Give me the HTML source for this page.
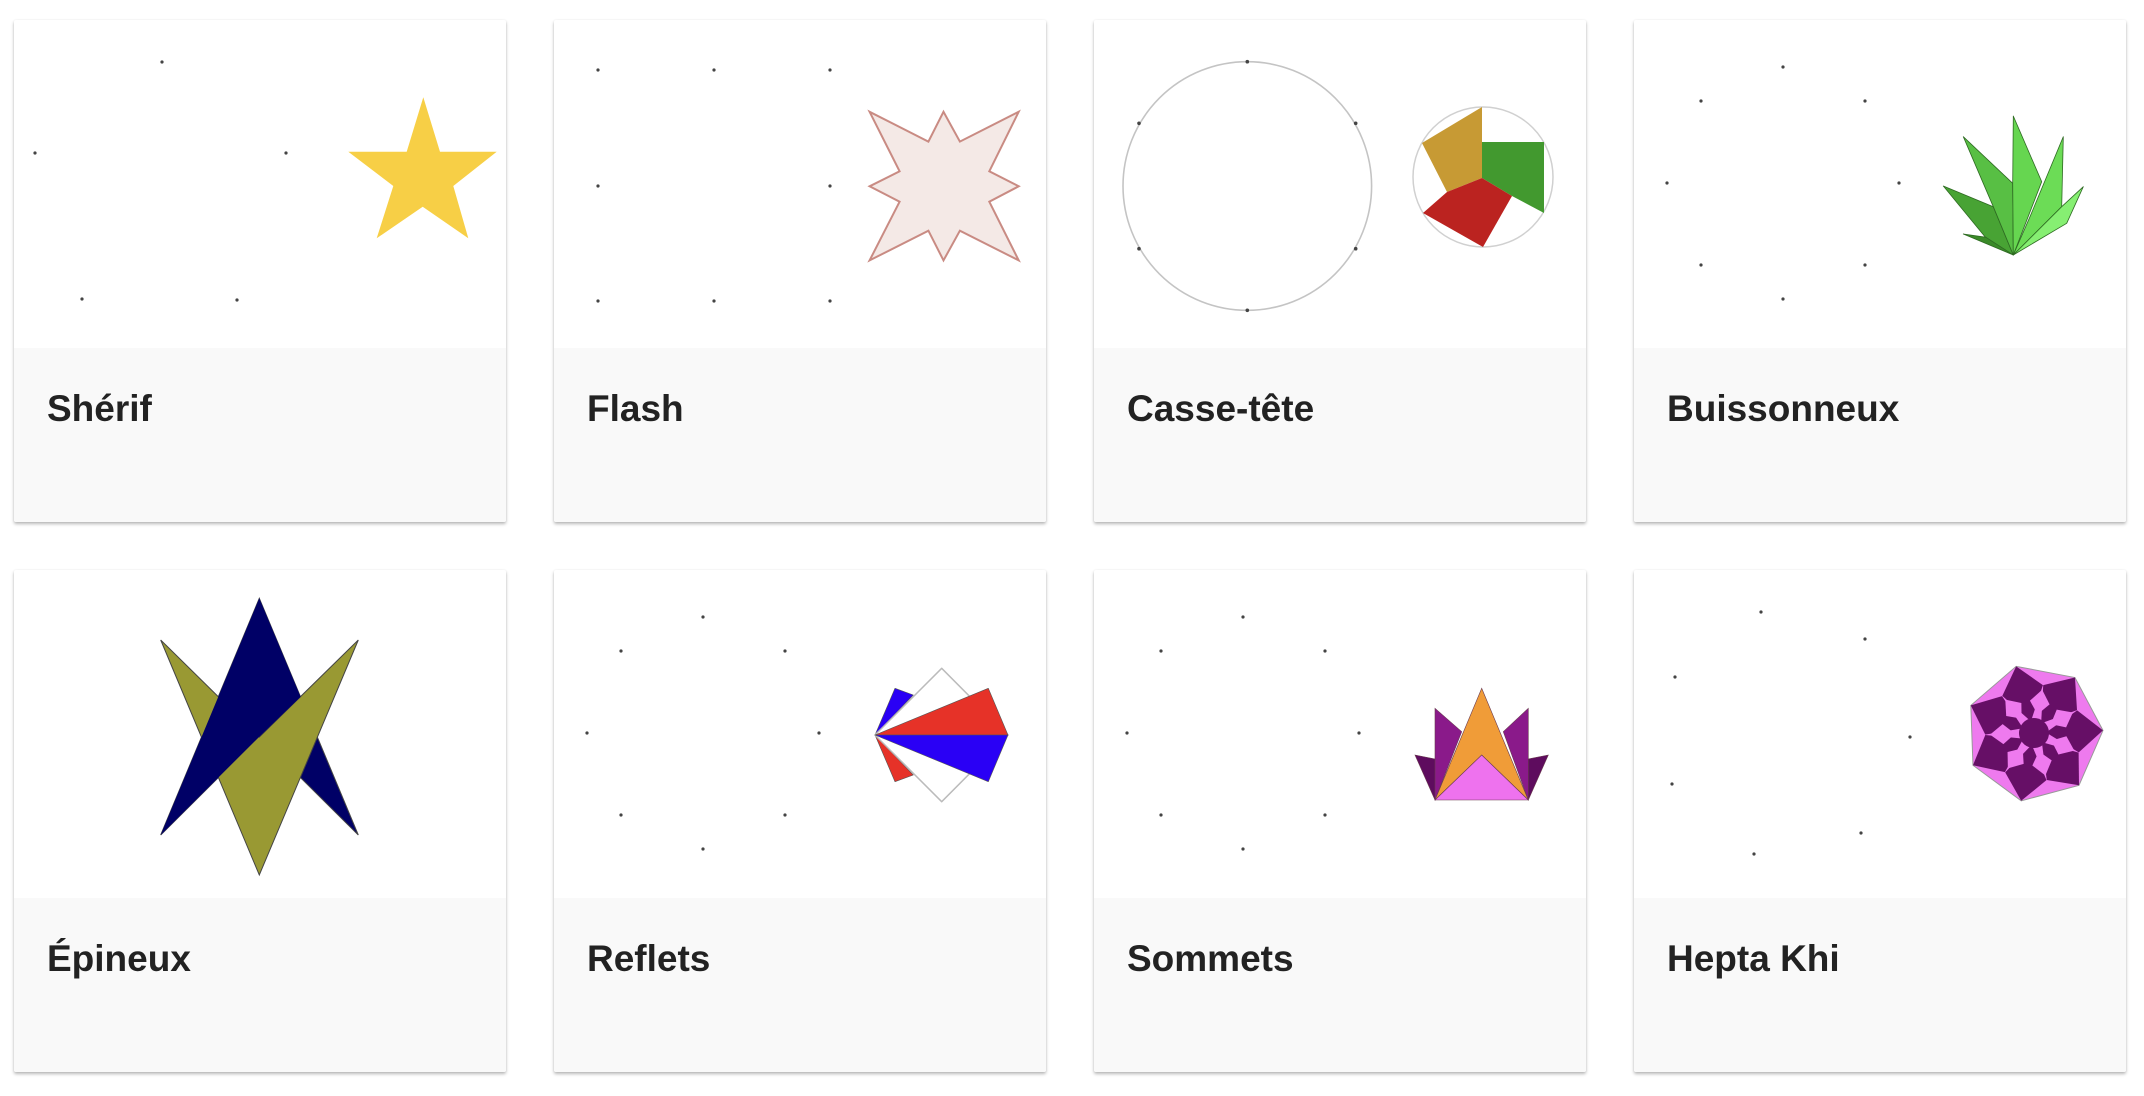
<!DOCTYPE html>
<html><head><meta charset="utf-8">
<style>
html,body{margin:0;padding:0;background:#fff;width:2144px;height:1096px;overflow:hidden;position:relative;font-family:"Liberation Sans",sans-serif;}
.card{position:absolute;width:492px;height:502px;background:#fff;box-shadow:0 2px 3px rgba(0,0,0,.28),0 0 2px rgba(0,0,0,.06);border-radius:2px;overflow:hidden;}
.foot{position:absolute;left:0;top:328px;width:492px;height:174px;background:#f9f9f9;}
.foot span{position:absolute;left:33px;top:41px;font-size:37px;line-height:40px;font-weight:bold;color:#222;white-space:nowrap;}
svg{position:absolute;left:0;top:0;}
</style></head><body>
<div class="card" style="left:14px;top:20px"><div class="foot"><span>Shérif</span></div></div>
<div class="card" style="left:554px;top:20px"><div class="foot"><span>Flash</span></div></div>
<div class="card" style="left:1094px;top:20px"><div class="foot"><span>Casse-tête</span></div></div>
<div class="card" style="left:1634px;top:20px"><div class="foot"><span>Buissonneux</span></div></div>
<div class="card" style="left:14px;top:570px"><div class="foot"><span>Épineux</span></div></div>
<div class="card" style="left:554px;top:570px"><div class="foot"><span>Reflets</span></div></div>
<div class="card" style="left:1094px;top:570px"><div class="foot"><span>Sommets</span></div></div>
<div class="card" style="left:1634px;top:570px"><div class="foot"><span>Hepta Khi</span></div></div>

<svg width="2144" height="1096" viewBox="0 0 2144 1096">
<g fill="#444">
<circle cx="162" cy="62" r="1.6"/><circle cx="35" cy="153" r="1.6"/><circle cx="286" cy="153" r="1.6"/><circle cx="82" cy="299" r="1.6"/><circle cx="237" cy="300" r="1.6"/>
<circle cx="598" cy="70" r="1.6"/><circle cx="714" cy="70" r="1.6"/><circle cx="830" cy="70" r="1.6"/>
<circle cx="598" cy="186" r="1.6"/><circle cx="830" cy="186" r="1.6"/>
<circle cx="598" cy="301" r="1.6"/><circle cx="714" cy="301" r="1.6"/><circle cx="830" cy="301" r="1.6"/>
<circle cx="1783" cy="67" r="1.6"/><circle cx="1701" cy="101" r="1.6"/><circle cx="1865" cy="101" r="1.6"/><circle cx="1667" cy="183" r="1.6"/><circle cx="1899" cy="183" r="1.6"/><circle cx="1701" cy="265" r="1.6"/><circle cx="1865" cy="265" r="1.6"/><circle cx="1783" cy="299" r="1.6"/>
<circle cx="703" cy="617" r="1.6"/><circle cx="621" cy="651" r="1.6"/><circle cx="785" cy="651" r="1.6"/><circle cx="587" cy="733" r="1.6"/><circle cx="819" cy="733" r="1.6"/><circle cx="621" cy="815" r="1.6"/><circle cx="785" cy="815" r="1.6"/><circle cx="703" cy="849" r="1.6"/>
<circle cx="1243" cy="617" r="1.6"/><circle cx="1161" cy="651" r="1.6"/><circle cx="1325" cy="651" r="1.6"/><circle cx="1127" cy="733" r="1.6"/><circle cx="1359" cy="733" r="1.6"/><circle cx="1161" cy="815" r="1.6"/><circle cx="1325" cy="815" r="1.6"/><circle cx="1243" cy="849" r="1.6"/>
<circle cx="1761" cy="612" r="1.6"/><circle cx="1865" cy="639" r="1.6"/><circle cx="1675" cy="677" r="1.6"/><circle cx="1910" cy="737" r="1.6"/><circle cx="1672" cy="784" r="1.6"/><circle cx="1861" cy="833" r="1.6"/><circle cx="1754" cy="854" r="1.6"/>
</g>

<polygon fill="#f7cf46" points="423.3,97.3 440,151.7 496.7,151.7 453.3,186 468.3,238.3 422.7,206.7 376.7,238.3 393.3,186 348.3,151.7 406.7,151.7"/>

<polygon fill="#f4e9e6" stroke="#c98b83" stroke-width="2" points="869.6,111.8 928.4,141.6 943.5,111.8 959.9,141.6 1018.7,111.8 989.3,171.3 1018.7,186.3 989.3,201.7 1018.7,260.4 959.9,230.7 943.5,260.4 928.4,230.7 869.6,260.4 899.6,201.7 869.6,186.3 899.6,171.3"/>

<circle cx="1247.3" cy="186" r="124.3" fill="none" stroke="#c4c4c4" stroke-width="1.6"/>
<g fill="#444"><circle cx="1247.3" cy="61.7" r="1.8"/><circle cx="1247.3" cy="310.3" r="1.8"/><circle cx="1139" cy="123.3" r="1.8"/><circle cx="1355.7" cy="123.3" r="1.8"/><circle cx="1139" cy="248.7" r="1.8"/><circle cx="1355.7" cy="248.7" r="1.8"/></g>
<circle cx="1483" cy="177" r="70" fill="none" stroke="#d0d0d0" stroke-width="1.5"/>
<polygon fill="#c79a34" points="1482,107 1422,143 1447,192 1482,178"/>
<polygon fill="#42992f" points="1482,142 1544,142 1544,213 1512,196 1482,178"/>
<polygon fill="#bb2320" points="1482,178 1512,196 1483,247 1423,213 1447,192"/>

<g stroke="#2e6a22" stroke-width="0.8" stroke-linejoin="round">
<polygon fill="#3a8a28" points="2013.3,255 1963.3,234 1993.3,238.3"/>
<polygon fill="#48a334" points="2013.3,255 1985,236.7 1943.3,186 1993.3,206.7"/>
<polygon fill="#58bf44" points="2013.3,255 1993.3,206.7 1963.3,136.7 2012.7,183.3"/>
<polygon fill="#66d650" points="2013.3,255 2012.7,183.3 2013.3,116 2041.7,181.7"/>
<polygon fill="#6cdc56" points="2013.3,255 2030,216.7 2063.3,136.7 2061.7,206.7"/>
<polygon fill="#86ef72" points="2013.3,255 2061.7,206.7 2083.3,186.7 2066.7,223.3"/>
</g>

<g stroke="#444" stroke-width="1">
<polygon fill="#000066" points="259.3,598.3 358.3,835 259.3,736.7 160.7,835"/>
<polygon fill="#999933" points="160.7,640 259.3,737 358.3,640 259.3,875"/>
<polygon fill="#000066" stroke="none" points="259.3,598.3 300.6,696.9 259.3,736.7 160.7,835"/>
</g>

<g stroke-linejoin="round">
<polygon fill="#2a00f5" stroke="#555" stroke-width="0.6" points="875,735 895,688.3 913.3,695"/>
<polygon fill="#e63228" stroke="#555" stroke-width="0.6" points="875,735 913.3,775 895,781.7"/>
<polygon fill="#fff" stroke="#bbb" stroke-width="1.5" points="875,735 941.7,668.3 1008,735 941.7,801.7"/>
<polygon fill="#e63228" stroke="#555" stroke-width="0.6" points="875,735 988.3,688.3 1008,735"/>
<polygon fill="#2a00f5" stroke="#555" stroke-width="0.6" points="875,735 1008,735 988.3,781.7"/>
</g>

<g stroke="#6a3a50" stroke-width="0.6">
<polygon fill="#5e0c5e" points="1415,755 1440,760 1435,800"/>
<polygon fill="#5e0c5e" points="1548.3,755 1523.3,760 1528.3,800"/>
<polygon fill="#8a1a8a" points="1435,708.3 1461.7,731.7 1435,800"/>
<polygon fill="#8a1a8a" points="1528.3,708.3 1503.3,731.7 1528.3,800"/>
<polygon fill="#f09c38" points="1481.7,688.3 1528.3,800 1481.7,755 1435,800"/>
<polygon fill="#ee72ee" points="1481.7,755 1528.3,800 1435,800"/>
</g>

<g transform="translate(2034 733) rotate(-15)">
<polygon fill="#ee7aee" stroke="#999" stroke-width="1" points="0,-69 53.9,-43 67.3,15.4 29.9,62.2 -29.9,62.2 -67.3,15.4 -53.9,-43"/>
<g fill="#660f66">
<polygon points="0,-69 21,-44 0,-12 -21,-44"/>
<polygon transform="rotate(51.43)" points="0,-69 21,-44 0,-12 -21,-44"/>
<polygon transform="rotate(102.86)" points="0,-69 21,-44 0,-12 -21,-44"/>
<polygon transform="rotate(154.29)" points="0,-69 21,-44 0,-12 -21,-44"/>
<polygon transform="rotate(205.71)" points="0,-69 21,-44 0,-12 -21,-44"/>
<polygon transform="rotate(257.14)" points="0,-69 21,-44 0,-12 -21,-44"/>
<polygon transform="rotate(308.57)" points="0,-69 21,-44 0,-12 -21,-44"/>
</g>
<g fill="#ee7aee">
<polygon transform="rotate(25.71)" points="0,-19 10,-31 0,-44 -10,-31"/>
<polygon transform="rotate(77.14)" points="0,-19 10,-31 0,-44 -10,-31"/>
<polygon transform="rotate(128.57)" points="0,-19 10,-31 0,-44 -10,-31"/>
<polygon transform="rotate(180)" points="0,-19 10,-31 0,-44 -10,-31"/>
<polygon transform="rotate(231.43)" points="0,-19 10,-31 0,-44 -10,-31"/>
<polygon transform="rotate(282.86)" points="0,-19 10,-31 0,-44 -10,-31"/>
<polygon transform="rotate(334.29)" points="0,-19 10,-31 0,-44 -10,-31"/>
</g>
<circle cx="0" cy="0" r="15" fill="#660f66"/>
</g>
</svg>
</body></html>
